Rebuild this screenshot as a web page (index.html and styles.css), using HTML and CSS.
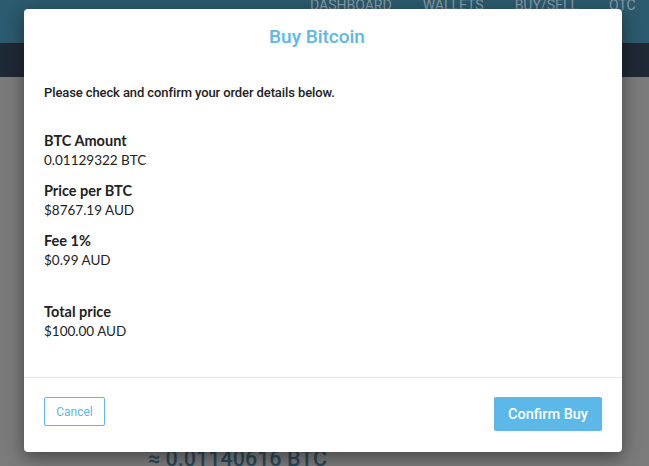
FILE: index.html
```html
<!DOCTYPE html>
<html lang="en">
<head>
    <meta charset="UTF-8">
    <meta name="viewport" content="width=device-width, initial-scale=1.0">
    <title>Buy Bitcoin</title>
    <link rel="stylesheet" href="styles.css">
</head>
<body>
    <div class="page">
        <nav class="topbar">
            <a class="nav-link">Dashboard</a>
            <a class="nav-link">Wallets</a>
            <a class="nav-link">Buy/Sell</a>
            <a class="nav-link">OTC</a>
        </nav>
        <div class="subbar"></div>
        <main class="content">
            <p class="estimate">&asymp; 0.01140616 BTC</p>
        </main>
    </div>

    <div class="modal">
        <div class="modal-header">
            <h2 class="modal-title">Buy Bitcoin</h2>
        </div>
        <div class="modal-body">
            <p class="intro">Please check and confirm your order details below.</p>
            <div class="detail">
                <p class="detail-label">BTC Amount</p>
                <p class="detail-value">0.01129322 BTC</p>
            </div>
            <div class="detail">
                <p class="detail-label">Price per BTC</p>
                <p class="detail-value">$8767.19 AUD</p>
            </div>
            <div class="detail">
                <p class="detail-label">Fee 1%</p>
                <p class="detail-value">$0.99 AUD</p>
            </div>
            <div class="detail total">
                <p class="detail-label">Total price</p>
                <p class="detail-value">$100.00 AUD</p>
            </div>
        </div>
        <div class="modal-footer">
            <button class="btn btn-cancel">Cancel</button>
            <button class="btn btn-confirm">Confirm Buy</button>
        </div>
    </div>
</body>
</html>
```

FILE: styles.css
```css
body {
    margin: 0;
    font-family: 'Lato', sans-serif;
    background: #7b7b7b;
    overflow: hidden;
    height: 466px;
}
p {
    margin: 0;
}
.page {
    display: flex;
    flex-direction: column;
    height: 466px;
}
.topbar {
    height: 43px;
    background: #2c5a6e;
    display: flex;
    align-items: flex-start;
    gap: 31px;
    padding-left: 310px;
    box-sizing: border-box;
}
.nav-link {
    font-family: 'Roboto', sans-serif;
    font-size: 14px;
    line-height: 14px;
    margin-top: -2px;
    text-transform: uppercase;
    color: #8a9ba4;
}
.subbar {
    height: 34px;
    background: #1f2835;
}
.content {
    flex: 1;
    background: #7b7b7b;
    position: relative;
}
.estimate {
    position: absolute;
    left: 148px;
    top: 369px;
    font-family: 'Roboto', sans-serif;
    font-size: 21.5px;
    font-weight: 500;
    color: #28485a;
}
.modal {
    position: absolute;
    left: 24px;
    top: 9px;
    width: 598px;
    height: 443px;
    background: #fff;
    border-radius: 4px;
    box-shadow: 0 5px 18px rgba(0, 0, 0, 0.45);
    display: flex;
    flex-direction: column;
}
.modal-header {
    padding: 17px 20px 0 8px;
}
.modal-title {
    margin: 0;
    text-align: center;
    font-family: 'Roboto', sans-serif;
    font-weight: 500;
    font-size: 19px;
    line-height: 21px;
    color: #5bb8e8;
}
.modal-body {
    padding: 38px 20px 0;
    flex: 1;
    color: #222;
}
.intro {
    font-family: 'Roboto', sans-serif;
    font-weight: 500;
    font-size: 13px;
    line-height: 16px;
    letter-spacing: -0.1px;
    margin-bottom: 30px;
}
.detail {
    margin-bottom: 10px;
}
.detail.total {
    margin-top: 31px;
}
.detail-label {
    font-weight: 700;
    font-size: 14.5px;
    line-height: 19px;
}
.detail-value {
    font-size: 13.5px;
    line-height: 21px;
}
.modal-footer {
    border-top: 1px solid #e5e5e5;
    padding: 19px 20px 21px;
    display: flex;
    justify-content: space-between;
    align-items: flex-start;
}
.btn {
    font-family: 'Roboto', sans-serif;
    border-radius: 2px;
    cursor: pointer;
}
.btn-cancel {
    width: 61px;
    height: 29px;
    background: #fff;
    border: 1px solid #5bb8e8;
    color: #5bb8e8;
    font-size: 12px;
}
.btn-confirm {
    width: 108px;
    height: 34px;
    background: #5bb8e8;
    border: none;
    color: #fff;
    font-size: 14.5px;
    font-weight: 500;
}
```
